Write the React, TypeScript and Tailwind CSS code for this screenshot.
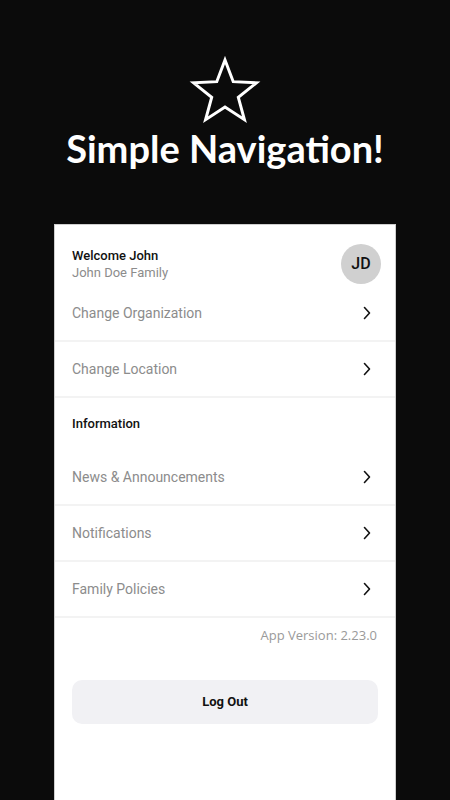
import { ReactNode } from "react";

const roboto = { fontFamily: "Roboto, 'Liberation Sans', sans-serif" };

const Chevron = () => (
  <svg width="10" height="14" viewBox="0 0 10 14" fill="none">
    <polyline points="2.5,1.5 7.5,7 2.5,12.5" stroke="#111" strokeWidth="1.6" strokeLinecap="round" strokeLinejoin="round" />
  </svg>
);

const Row = ({ children }: { children: ReactNode }) => (
  <div className="flex h-[56px] items-center justify-between border-b-2 border-[#f3f3f3] pl-[17px] pr-[23px]">
    <span className="text-[14px] text-[#8c8c8c]">{children}</span>
    <Chevron />
  </div>
);

const App = () => {
  return (
    <div className="flex h-[800px] w-[450px] flex-col overflow-hidden bg-[#0b0b0b]" style={roboto}>
      <div className="flex flex-col items-center pt-[56px]">
        <svg width="72" height="68" viewBox="0 0 72 68" fill="none">
          <polygon
            points="36,4 44.23,25.67 67.38,26.8 49.31,41.33 55.4,63.7 36,51 16.6,63.7 22.69,41.33 4.62,26.8 27.77,25.67"
            stroke="#fff"
            strokeWidth="3"
            strokeLinejoin="miter"
          />
        </svg>
        <h1
          className="mt-[2px] text-[38px] font-bold leading-[44px] text-white"
          style={{ fontFamily: "Lato, 'Open Sans', sans-serif" }}
        >
          Simple Navigation!
        </h1>
      </div>

      <div className="ml-[54px] mt-[54px] flex w-[342px] flex-1 flex-col border border-b-0 border-[#cfcfcf] bg-white">
        <div className="flex items-center justify-between pl-[17px] pr-[14px] pt-[19px]">
          <div className="flex flex-col">
            <span className="text-[13px] font-medium leading-[17px] text-[#111]">Welcome John</span>
            <span className="text-[13px] leading-[17px] text-[#8c8c8c]">John Doe Family</span>
          </div>
          <div className="flex h-[40px] w-[40px] items-center justify-center rounded-full bg-[#d0d0d0] text-[16px] font-medium text-[#111]">
            JD
          </div>
        </div>

        <div className="mt-[2px] flex flex-col">
          <Row>Change Organization</Row>
          <Row>Change Location</Row>
          <div className="flex h-[52px] items-center pl-[17px]">
            <span className="text-[13px] font-medium text-[#111]">Information</span>
          </div>
          <Row>News &amp; Announcements</Row>
          <Row>Notifications</Row>
          <Row>Family Policies</Row>
        </div>

        <div
          className="pr-[18px] pt-[8px] text-right text-[13px] leading-[18px] text-[#9a9a9a]"
          style={{ fontFamily: "'Open Sans', sans-serif" }}
        >
          App Version: 2.23.0
        </div>

        <button className="mx-[17px] mt-[36px] flex h-[44px] items-center justify-center rounded-[10px] bg-[#f1f1f4] text-[13px] font-bold text-[#111]">
          Log Out
        </button>
      </div>
    </div>
  );
};

export default App;
